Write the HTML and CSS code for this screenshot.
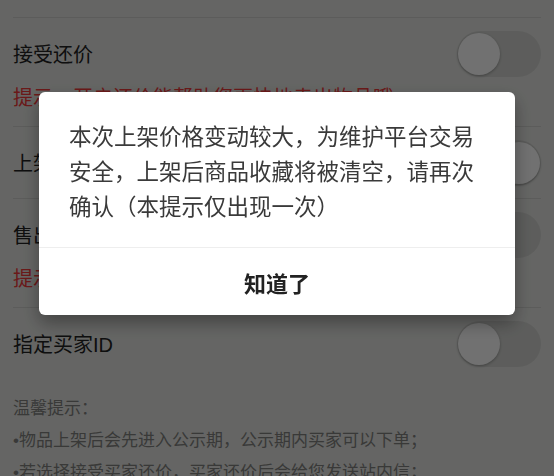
FILE: index.html
```html
<!DOCTYPE html>
<html lang="zh-CN">
<head>
  <meta charset="UTF-8">
  <meta name="viewport" content="width=device-width, initial-scale=1.0">
  <title>上架设置</title>
  <link rel="stylesheet" href="styles.css">
</head>
<body>
  <div class="page">
    <div class="list">
      <div class="cell">
        <div class="cell-main">
          <span class="cell-title">接受还价</span>
          <span class="switch"></span>
        </div>
        <div class="cell-hint">提示：开启还价能帮助您更快地卖出物品哦</div>
      </div>
      <div class="cell">
        <div class="cell-main">
          <span class="cell-title">上架即擦亮</span>
          <span class="switch on"></span>
        </div>
      </div>
      <div class="cell">
        <div class="cell-main">
          <span class="cell-title">售出后自动下架</span>
          <span class="switch"></span>
        </div>
        <div class="cell-hint">提示：开启后物品售出将自动下架</div>
      </div>
      <div class="cell">
        <div class="cell-main">
          <span class="cell-title">指定买家ID</span>
          <span class="switch"></span>
        </div>
      </div>
    </div>

    <div class="notes">
      <p>温馨提示：</p>
      <p>•物品上架后会先进入公示期，公示期内买家可以下单；</p>
      <p>•若选择接受买家还价，买家还价后会给您发送站内信；</p>
    </div>
  </div>

  <div class="mask">
    <div class="dialog">
      <div class="dialog-body">本次上架价格变动较大，为维护平台交易安全，上架后商品收藏将被清空，请再次确认（本提示仅出现一次）</div>
      <button class="dialog-btn">知道了</button>
    </div>
  </div>
</body>
</html>
```

FILE: styles.css
```css
html, body {
  margin: 0;
  height: 100%;
  overflow: hidden;
}

body {
  font-family: "Noto Sans CJK SC", "Noto Sans", sans-serif;
  background-color: #e4e5e2;
  color: #222;
}

.page {
  padding-top: 17px;
}

.list {
  margin: 0 13px;
}

.cell {
  border-top: 1px solid #cfd0cd;
}

.cell-main {
  height: 71px;
  display: flex;
  align-items: center;
  justify-content: space-between;
}

.cell-title {
  font-family: "Liberation Sans", "Noto Sans CJK SC", sans-serif;
  font-size: 20px;
}

.cell-hint {
  font-size: 20px;
  line-height: 22px;
  color: #f03a3a;
  margin-top: -3px;
  padding-bottom: 18px;
}

/* off by default, knob on the left */
.switch {
  position: relative;
  width: 84px;
  height: 46px;
  border-radius: 23px;
  background-color: #d2d3d0;
}

.switch::after {
  content: "";
  position: absolute;
  top: 2px;
  left: 1px;
  width: 42px;
  height: 42px;
  border-radius: 50%;
  background-color: #fff;
  box-shadow: 0 1px 3px rgba(0, 0, 0, 0.3);
}

.switch.on::after {
  left: 41px;
}

.notes {
  padding: 14px 13px 0;
  font-family: "Liberation Sans", "Noto Sans CJK SC", sans-serif;
  font-size: 17px;
  line-height: 32px;
  color: #80817e;
}

.notes p {
  margin: 0;
}

.mask {
  position: fixed;
  top: 0;
  left: 0;
  right: 0;
  bottom: 0;
  background-color: rgba(0, 0, 0, 0.555);
  display: flex;
  justify-content: center;
  align-items: flex-start;
  padding-top: 92px;
}

.dialog {
  width: 476px;
  background-color: #fff;
  border-radius: 6px;
  box-shadow: 0 8px 18px rgba(0, 0, 0, 0.35);
  overflow: hidden;
}

.dialog-body {
  padding: 26px 30px 24px;
  font-size: 22.5px;
  line-height: 35px;
  color: #3a3a3a;
  border-bottom: 1px solid #eee;
}

.dialog-btn {
  display: block;
  width: 100%;
  height: 67px;
  border: none;
  background: none;
  font-family: inherit;
  font-size: 22px;
  font-weight: bold;
  color: #222;
  cursor: pointer;
}
```
